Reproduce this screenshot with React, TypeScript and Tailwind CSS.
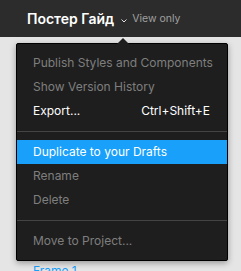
const font = { fontFamily: "Inter, 'Noto Sans', sans-serif" };

type Item = { label: string; shortcut?: string; disabled?: boolean; active?: boolean };

const groups: Item[][] = [
  [
    { label: "Publish Styles and Components", disabled: true },
    { label: "Show Version History", disabled: true },
    { label: "Export...", shortcut: "Ctrl+Shift+E" },
  ],
  [
    { label: "Duplicate to your Drafts", active: true },
    { label: "Rename", disabled: true },
    { label: "Delete", disabled: true },
  ],
  [{ label: "Move to Project...", disabled: true }],
];

function MenuRow({ item }: { item: Item }) {
  const color = item.active
    ? "bg-[#18a0fb] text-white"
    : item.disabled
      ? "text-[#7e7e7e]"
      : "text-white";
  return (
    <div
      className={`flex h-6 items-center justify-between whitespace-nowrap pl-4 pr-[17px] text-[12px] ${color}`}
    >
      <span>{item.label}</span>
      {item.shortcut ? <span>{item.shortcut}</span> : null}
    </div>
  );
}

export default function App() {
  return (
    <div className="relative h-[271px] w-[241px] overflow-hidden bg-[#e5e5e5]" style={font}>
      <div className="flex h-[37px] items-center bg-[#2c2c2c] pl-[27px]">
        <span className="text-[14px] font-semibold text-white">Постер Гайд</span>
        <svg width="6" height="4" viewBox="0 0 6 4" className="ml-[7px] mt-[4px]">
          <path d="M0.5 0.5 L3 3 L5.5 0.5" fill="none" stroke="#ddd" strokeWidth="1" />
        </svg>
        <span className="ml-[5px] mt-[1px] text-[10.5px] text-[#a0a0a0]">View only</span>
      </div>

      <div className="px-4 pt-[6px]">
        <div className="relative w-[212px] rounded-[2px] border border-black bg-[#1e1e1e] py-[7px] shadow-[0_2px_6px_rgba(0,0,0,0.35)]">
          <div className="absolute -top-[6px] left-[100px] h-0 w-0 border-x-[6px] border-b-[6px] border-x-transparent border-b-[#1e1e1e]" />
          {groups.map((g, i) => (
            <div key={i}>
              {i > 0 ? <div className="my-2 h-px bg-[#444]" /> : null}
              {g.map((item) => (
                <MenuRow key={item.label} item={item} />
              ))}
            </div>
          ))}
        </div>
        <div className="pl-[17px] pt-[2px] text-[12px] leading-4 text-[#18a0fb]">Frame 1</div>
      </div>
    </div>
  );
}
